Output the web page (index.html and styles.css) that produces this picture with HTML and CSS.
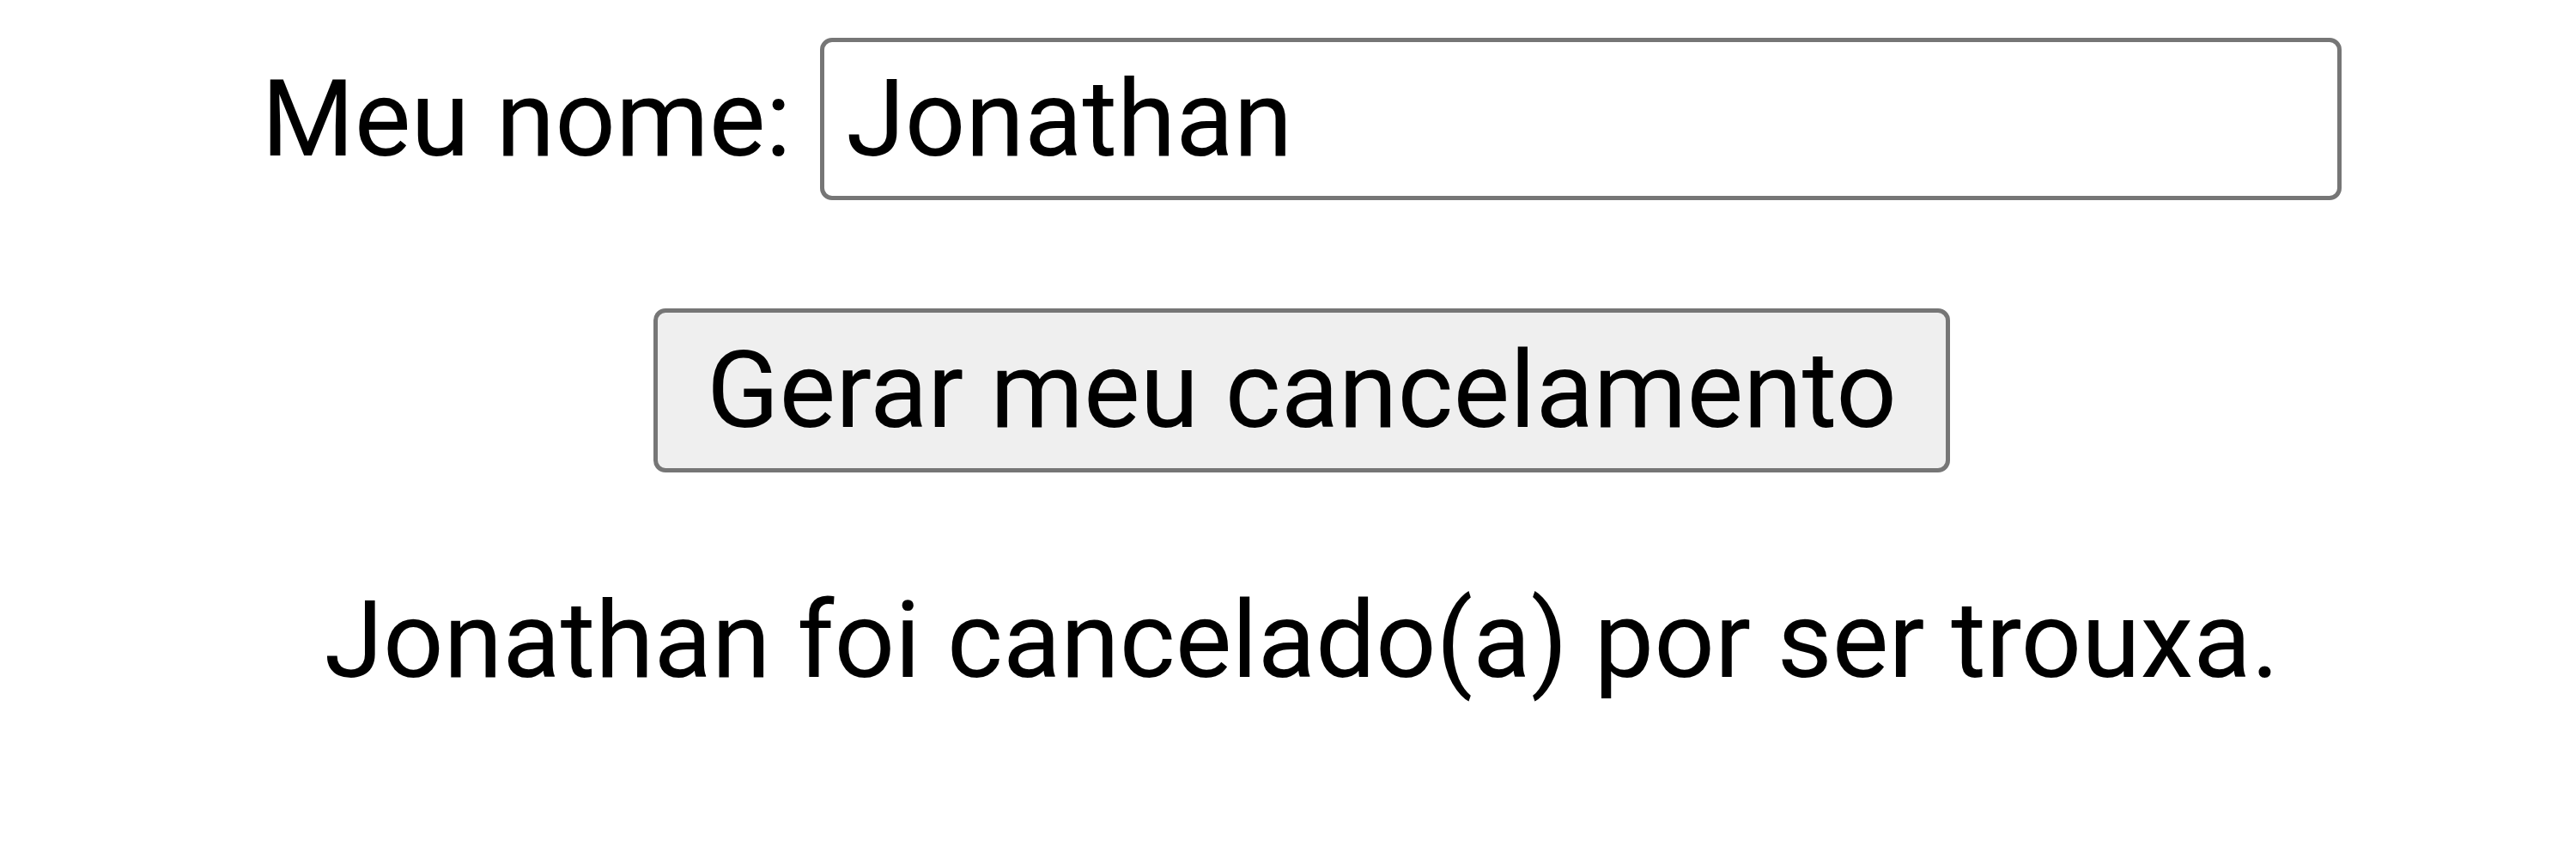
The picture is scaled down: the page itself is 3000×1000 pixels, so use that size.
FILE: index.html
```html
<!DOCTYPE html>
<html lang="pt-BR">
<head>
    <meta charset="UTF-8">
    <meta name="viewport" content="width=device-width, initial-scale=1.0">
    <title>Cancelamento</title>
    <link rel="stylesheet" href="styles.css">
</head>
<body>
    <div class="container">
        <div class="row">
            <label for="nome">Meu nome:</label>
            <input type="text" id="nome" name="nome" value="Jonathan">
        </div>
        <button type="button" id="gerar">Gerar meu cancelamento</button>
        <p id="resultado">Jonathan foi cancelado(a) por ser trouxa.</p>
    </div>
</body>
</html>
```

FILE: styles.css
```css
body{
    margin: 0;
    background-color: #ffffff;
    color: #000000;
    font-family: Roboto, "Liberation Sans", sans-serif;
    font-size: 124px;
}
.container{
    display: flex;
    flex-direction: column;
    align-items: center;
    padding-top: 44px;
    padding-left: 32px;
}
.row{
    display: flex;
    align-items: center;
    gap: 34px;
}
input{
    box-sizing: border-box;
    width: 1772px;
    height: 189px;
    padding: 0 25px;
    border: 5px solid #767676;
    border-radius: 14px;
    font-family: inherit;
    font-size: inherit;
    color: #000000;
}
button{
    box-sizing: border-box;
    height: 191px;
    margin-top: 126px;
    padding: 0 57px;
    border: 5px solid #767676;
    border-radius: 14px;
    background-color: #efefef;
    font-family: inherit;
    font-size: inherit;
    color: #000000;
}
#resultado{
    margin: 123px 0 0;
}
```
